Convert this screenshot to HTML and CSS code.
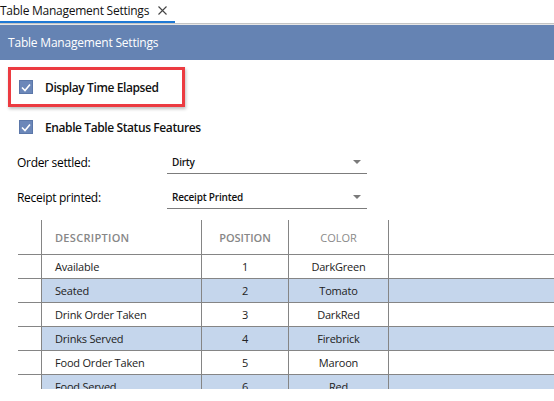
FILE: index.html
```html
<!DOCTYPE html>
<html>
<head>
<meta charset="utf-8">
<link rel="stylesheet" href="styles.css">
</head>
<body>
<div class="tabstrip">
  <div class="tab"><span class="tab-title">Table Management Settings</span><svg class="tab-close" width="9" height="9" viewBox="0 0 9 9"><path d="M0.5 0.5 L8.5 8.5 M8.5 0.5 L0.5 8.5" stroke="#444" stroke-width="1.1" fill="none"/></svg></div>
</div>
<div class="tabline"></div>
<div class="titlebar">Table Management Settings</div>
<div class="content">
  <div class="highlight">
    <label class="check"><span class="box"><svg width="10" height="9" viewBox="0 0 10 9"><polyline points="1,4.5 4,7.5 9,1.5" fill="none" stroke="#fff" stroke-width="1.6"/></svg></span><span class="check-label">Display Time Elapsed</span></label>
  </div>
  <label class="check check2"><span class="box"><svg width="10" height="9" viewBox="0 0 10 9"><polyline points="1,4.5 4,7.5 9,1.5" fill="none" stroke="#fff" stroke-width="1.6"/></svg></span><span class="check-label">Enable Table Status Features</span></label>

  <div class="field field1">
    <span class="field-label">Order settled:</span>
    <div class="combo"><span class="combo-text">Dirty</span><span class="arrow"></span></div>
  </div>
  <div class="field field2">
    <span class="field-label">Receipt printed:</span>
    <div class="combo"><span class="combo-text">Receipt Printed</span><span class="arrow"></span></div>
  </div>
</div>
<div class="grid">
  <div class="row head">
    <div class="c rh"></div>
    <div class="c desc hd">DESCRIPTION</div>
    <div class="c pos hd">POSITION</div>
    <div class="c col hd light">COLOR</div>
    <div class="c rest"></div>
  </div>
  <div class="row"><div class="c rh"></div><div class="c desc">Available</div><div class="c pos">1</div><div class="c col">DarkGreen</div><div class="c rest"></div></div>
  <div class="row alt"><div class="c rh"></div><div class="c desc">Seated</div><div class="c pos">2</div><div class="c col">Tomato</div><div class="c rest"></div></div>
  <div class="row"><div class="c rh"></div><div class="c desc">Drink Order Taken</div><div class="c pos">3</div><div class="c col">DarkRed</div><div class="c rest"></div></div>
  <div class="row alt"><div class="c rh"></div><div class="c desc">Drinks Served</div><div class="c pos">4</div><div class="c col">Firebrick</div><div class="c rest"></div></div>
  <div class="row"><div class="c rh"></div><div class="c desc">Food Order Taken</div><div class="c pos">5</div><div class="c col">Maroon</div><div class="c rest"></div></div>
  <div class="row alt"><div class="c rh"></div><div class="c desc">Food Served</div><div class="c pos">6</div><div class="c col">Red</div><div class="c rest"></div></div>
</div>
</body>
</html>
```

FILE: styles.css
```css
* { box-sizing: border-box; }
html, body { margin: 0; padding: 0; background: #fff; }
body {
  font-family: "Segoe UI", "Open Sans", "Noto Sans", sans-serif;
  color: #1a1a1a;
  width: 554px;
  height: 401px;
  overflow: hidden;
}
.tabstrip { height: 23px; display: flex; }
.tab {
  width: 175px;
  height: 23px;
  border-bottom: 2px solid #1e78d4;
  display: flex;
  align-items: center;
  padding-bottom: 1px;
}
.tab-title { font-size: 12px; color: #111; letter-spacing: -0.25px; }
.tab-close { margin-left: 9px; }
.tabline { height: 2px; border-top: 1px solid #c4c4c4; border-bottom: 1px solid #e6e6e6; }
.titlebar {
  height: 35px;
  background: #6583b3;
  color: #fff;
  font-size: 12px;
  display: flex;
  align-items: center;
  padding-left: 8px;
  letter-spacing: -0.2px;
}
.content { padding-left: 8px; }
.highlight {
  margin-top: 7px;
  width: 177px;
  height: 40px;
  border: 3px solid #ec3b41;
  box-shadow: 1px 2px 3px rgba(0,0,0,0.25);
  display: flex;
  align-items: center;
  padding-left: 8px;
}
.check { display: flex; align-items: center; gap: 12px; }
.check2 { margin-top: 13px; margin-left: 11px; height: 14px; }
.box {
  width: 14px;
  height: 14px;
  background: #6b87b9;
  border: 1px solid #5b77a9;
  display: flex;
  align-items: center;
  justify-content: center;
}
.check-label { font-size: 12px; font-weight: 600; color: #111; letter-spacing: -0.4px; }
.field { display: flex; align-items: center; height: 24px; padding-left: 9px; }
.field1 { margin-top: 16px; }
.field2 { margin-top: 11px; }
.field-label { width: 150px; font-size: 12px; font-weight: 500; color: #000; letter-spacing: -0.3px; }
.combo {
  width: 200px;
  height: 24px;
  border-bottom: 1px solid #7c7c7c;
  display: flex;
  align-items: center;
  padding-left: 5px;
  padding-right: 6px;
}
.combo-text { font-size: 10px; font-weight: 600; color: #111; flex: 1; letter-spacing: -0.2px; }
.arrow {
  width: 0; height: 0;
  border-left: 4px solid transparent;
  border-right: 4px solid transparent;
  border-top: 4px solid #7a7a7a;
}
.grid {
  margin-top: 11px;
  margin-left: 18px;
  height: 169px;
  overflow: hidden;
}
.row {
  display: grid;
  grid-template-columns: 24px 160px 87px 100px 1fr;
  height: 24px;
  border-bottom: 1px solid #858585;
}
.row.head { height: 35px; }
.c {
  border-right: 1px solid #858585;
  display: flex;
  align-items: center;
  font-size: 11px;
  color: #222;
  letter-spacing: -0.2px;
}
.c.rest { border-right: none; }
.alt .desc, .alt .pos, .alt .col, .alt .rest { background: #c5d6ec; }
.desc { padding-left: 13px; }
.pos, .col { justify-content: center; }
.hd { font-size: 11px; font-weight: 600; color: #878787; letter-spacing: 0; }
.desc.hd { letter-spacing: 0.3px; }
.hd.light { font-weight: 400; color: #8a8a8a; }
```
